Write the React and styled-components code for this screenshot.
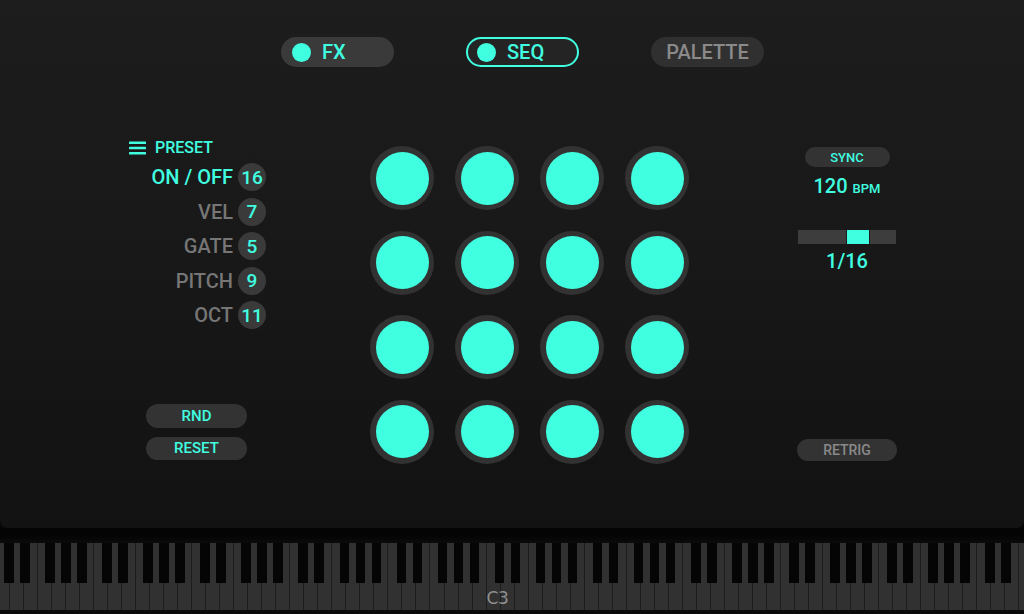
import React from "react";
import styled, { createGlobalStyle } from "styled-components";

const TEAL = "#40ffe0";

const Global = createGlobalStyle`
  html, body { margin: 0; padding: 0; background: #070707; }
  body { font-family: Roboto, "Noto Sans", "Liberation Sans", sans-serif; }
  * { box-sizing: border-box; }
`;

const Root = styled.div`
  width: 1024px;
  height: 614px;
  overflow: hidden;
  display: flex;
  flex-direction: column;
  background: #070707;
`;

const Panel = styled.div`
  height: 528px;
  flex: none;
  padding-top: 37px;
  border-radius: 0 0 8px 8px;
  background: linear-gradient(180deg, #1d1d1d 0%, #191919 40%, #121212 100%);
`;

const TopBar = styled.div`
  display: flex;
  gap: 72px;
  padding-left: 281px;
  height: 30px;
`;

const Pill = styled.div`
  width: 113px;
  height: 30px;
  border-radius: 15px;
  display: flex;
  align-items: center;
  gap: 11px;
  padding-left: ${(p) => (p.$active ? 9 : 11)}px;
  justify-content: ${(p) => (p.$center ? "center" : "flex-start")};
  background: ${(p) => p.$bg};
  border: ${(p) => (p.$active ? `2px solid ${TEAL}` : "none")};
  color: ${(p) => (p.$muted ? "#8a8a8a" : TEAL)};
  font-size: 20px;
  font-weight: 500;
  line-height: 1;
  ${(p) => (p.$center ? "padding-left: 0;" : "")}
`;

const PillDot = styled.span`
  width: 19px;
  height: 19px;
  border-radius: 50%;
  background: ${TEAL};
  flex: none;
`;

const Body = styled.div`
  display: flex;
  margin-top: 73px;
  height: 321px;
`;

const LeftCol = styled.div`
  width: 266px;
  flex: none;
  display: flex;
  flex-direction: column;
`;

const PresetHeader = styled.div`
  margin-left: 129px;
  height: 16px;
  display: flex;
  align-items: center;
  gap: 9px;
  color: ${TEAL};
  font-size: 16px;
  font-weight: 500;
  line-height: 16px;
`;

const Rows = styled.div`
  margin-top: 4px;
  display: flex;
  flex-direction: column;
`;

const Row = styled.div`
  height: 34.5px;
  display: flex;
  align-items: center;
  justify-content: flex-end;
  gap: 5px;
`;

const RowLabel = styled.span`
  font-size: 20px;
  line-height: 20px;
  font-weight: 500;
  color: ${(p) => (p.$active ? TEAL : "#767676")};
`;

const Badge = styled.span`
  width: 28px;
  height: 28px;
  border-radius: 50%;
  background: #3a3a3a;
  color: ${TEAL};
  display: flex;
  align-items: center;
  justify-content: center;
  font-size: 19px;
  font-weight: 500;
  line-height: 1;
`;

const SmallButton = styled.div`
  width: ${(p) => p.$w}px;
  height: ${(p) => p.$h}px;
  border-radius: ${(p) => p.$h / 2}px;
  background: #333333;
  color: ${(p) => (p.$muted ? "#8a8a8a" : TEAL)};
  display: flex;
  align-items: center;
  justify-content: center;
  font-size: ${(p) => p.$fs || 14}px;
  font-weight: 500;
  line-height: 1;
  flex: none;
`;

const LeftButtons = styled.div`
  margin-top: 71.5px;
  margin-left: 146px;
  display: flex;
  flex-direction: column;
  gap: 9px;
`;

const PadGrid = styled.div`
  margin-left: 104px;
  margin-top: 6px;
  display: grid;
  grid-template-columns: repeat(4, 64px);
  grid-auto-rows: 64px;
  column-gap: 21px;
  row-gap: 20.5px;
  align-self: flex-start;
`;

const Pad = styled.div`
  width: 64px;
  height: 64px;
  border-radius: 50%;
  background: #323232;
  display: flex;
  align-items: center;
  justify-content: center;
`;

const PadLight = styled.div`
  width: 53px;
  height: 53px;
  border-radius: 50%;
  background: ${TEAL};
`;

const RightCol = styled.div`
  margin-left: 108px;
  width: 100px;
  flex: none;
  display: flex;
  flex-direction: column;
  align-items: center;
`;

const Sync = styled(SmallButton)`
  margin-top: 7px;
`;

const Bpm = styled.div`
  margin-top: 7px;
  color: ${TEAL};
  font-size: 20px;
  line-height: 24px;
  font-weight: 500;
  display: flex;
  align-items: baseline;
  gap: 5px;
`;

const BpmUnit = styled.span`
  font-size: 13px;
`;

const Track = styled.div`
  margin-top: 29px;
  width: 98px;
  height: 15px;
  display: flex;
  background: #3d3d3d;
`;

const TrackSeg = styled.div`
  flex: ${(p) => p.$grow};
`;

const Thumb = styled.div`
  width: 24px;
  background: ${TEAL};
  border-left: 1px solid #1d1d1d;
  border-right: 1px solid #1d1d1d;
`;

const Division = styled.div`
  margin-top: 5px;
  color: ${TEAL};
  font-size: 20px;
  line-height: 24px;
  font-weight: 500;
`;

const Retrig = styled(SmallButton)`
  margin-top: 166px;
`;

const KeyGap = styled.div`
  height: 15px;
  flex: none;
  background: linear-gradient(180deg, #040404 0%, #040404 50%, #0b0b0b 100%);
`;

const Keyboard = styled.div`
  position: relative;
  height: 71px;
  flex: none;
  background: #0a0a0a;
  overflow: hidden;
`;

const WhiteRow = styled.div`
  display: flex;
  margin-left: -4px;
  height: 67px;
`;

const WhiteKey = styled.div`
  position: relative;
  width: 14.02px;
  flex: none;
  height: 67px;
  background: #313131;
  border-right: 1px solid #1c1c1c;
`;

const KeyLabel = styled.span`
  position: absolute;
  z-index: 3;
  left: 0px;
  bottom: 3px;
  font-family: "DejaVu Sans", sans-serif;
  font-size: 17px;
  line-height: 1;
  color: #8f8f8f;
  letter-spacing: -0.5px;
  white-space: nowrap;
`;

const BlackKey = styled.div`
  position: absolute;
  top: 0;
  width: 9.5px;
  height: 40px;
  background: #050505;
`;

const HamburgerIcon = () => (
  <svg width="17" height="14" viewBox="0 0 17 14">
    <rect x="0" y="0.5" width="17" height="2.6" rx="0.6" fill={TEAL} />
    <rect x="0" y="5.7" width="17" height="2.6" rx="0.6" fill={TEAL} />
    <rect x="0" y="10.9" width="17" height="2.6" rx="0.6" fill={TEAL} />
  </svg>
);

const rows = [
  { label: "ON / OFF", value: 16, active: true },
  { label: "VEL", value: 7 },
  { label: "GATE", value: 5 },
  { label: "PITCH", value: 9 },
  { label: "OCT", value: 11 },
];

const OCTAVE = 98.14;
const KEY_W = OCTAVE / 7;
const blackOffsets = [
  [1, -6],
  [2, -4],
  [4, -7],
  [5, -5],
  [6, -3],
];

export default function App() {
  const whiteKeys = [];
  const blackKeys = [];
  for (let o = 0; o < 11; o++) {
    for (let k = 0; k < 7; k++) {
      const idx = o * 7 + k;
      whiteKeys.push(
        <WhiteKey key={idx}>{o === 5 && k === 0 ? <KeyLabel>C3</KeyLabel> : null}</WhiteKey>
      );
    }
    blackOffsets.forEach(([b, off], i) => {
      const x = -4 + o * OCTAVE + b * KEY_W + off;
      blackKeys.push(<BlackKey key={`${o}-${i}`} style={{ left: `${x}px` }} />);
    });
  }

  return (
    <Root>
      <Global />
      <Panel>
        <TopBar>
          <Pill $bg="#3a3a3a">
            <PillDot />
            FX
          </Pill>
          <Pill $bg="#242424" $active>
            <PillDot />
            SEQ
          </Pill>
          <Pill $bg="#303030" $muted $center>
            PALETTE
          </Pill>
        </TopBar>
        <Body>
          <LeftCol>
            <PresetHeader>
              <HamburgerIcon />
              PRESET
            </PresetHeader>
            <Rows>
              {rows.map((r) => (
                <Row key={r.label}>
                  <RowLabel $active={r.active}>{r.label}</RowLabel>
                  <Badge>{r.value}</Badge>
                </Row>
              ))}
            </Rows>
            <LeftButtons>
              <SmallButton $w={101} $h={24} $fs={15}>RND</SmallButton>
              <SmallButton $w={101} $h={23} $fs={15}>RESET</SmallButton>
            </LeftButtons>
          </LeftCol>
          <PadGrid>
            {Array.from({ length: 16 }).map((_, i) => (
              <Pad key={i}>
                <PadLight />
              </Pad>
            ))}
          </PadGrid>
          <RightCol>
            <Sync $w={85} $h={20} $fs={13}>SYNC</Sync>
            <Bpm>
              120<BpmUnit>BPM</BpmUnit>
            </Bpm>
            <Track>
              <TrackSeg $grow={48} />
              <Thumb />
              <TrackSeg $grow={26} />
            </Track>
            <Division>1/16</Division>
            <Retrig $w={100} $h={22} $fs={14} $muted>RETRIG</Retrig>
          </RightCol>
        </Body>
      </Panel>
      <KeyGap />
      <Keyboard>
        <WhiteRow>{whiteKeys}</WhiteRow>
        {blackKeys}
      </Keyboard>
    </Root>
  );
}
